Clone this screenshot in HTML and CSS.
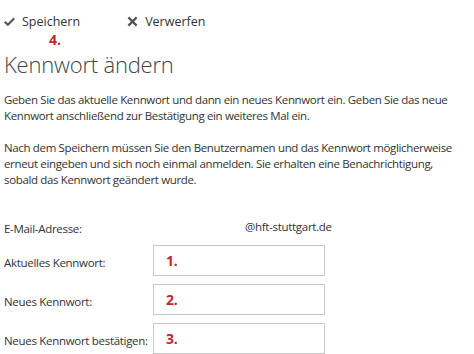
FILE: index.html
```html
<!DOCTYPE html>
<html lang="de">
<head>
    <meta charset="UTF-8">
    <title>Kennwort ändern</title>
    <link rel="stylesheet" href="styles.css">
</head>
<body>
    <div class="page">
        <div class="toolbar">
            <span class="tool">
                <svg class="icon" viewBox="0 0 12 12" width="11" height="11"><path d="M0.8 6.3 L4.2 9.6 L11.2 2.4" fill="none" stroke="#555" stroke-width="2.3"/></svg>
                Speichern
            </span>
            <span class="tool">
                <svg class="icon" viewBox="0 0 12 12" width="11" height="11"><path d="M1.5 1.5 L10.5 10.5 M10.5 1.5 L1.5 10.5" fill="none" stroke="#555" stroke-width="2.4"/></svg>
                Verwerfen
            </span>
        </div>
        <div class="step step-save">4.</div>

        <h1 class="title">Kennwort ändern</h1>

        <p class="info">Geben Sie das aktuelle Kennwort und dann ein neues Kennwort ein. Geben Sie das neue Kennwort anschließend zur Bestätigung ein weiteres Mal ein.</p>
        <p class="info">Nach dem Speichern müssen Sie den Benutzernamen und das Kennwort möglicherweise erneut eingeben und sich noch einmal anmelden. Sie erhalten eine Benachrichtigung, sobald das Kennwort geändert wurde.</p>

        <div class="form">
            <div class="label email">E-Mail-Adresse:</div>
            <div class="value">@hft-stuttgart.de</div>

            <div class="label">Aktuelles Kennwort:</div>
            <div class="field"><span class="step">1.</span></div>

            <div class="label">Neues Kennwort:</div>
            <div class="field"><span class="step">2.</span></div>

            <div class="label">Neues Kennwort bestätigen:</div>
            <div class="field"><span class="step">3.</span></div>
        </div>
    </div>
</body>
</html>
```

FILE: styles.css
```css
body {
    margin: 0;
    padding: 0;
    background: #fff;
    font-family: "Open Sans", sans-serif;
    color: #333;
}

.page {
    padding: 12px 0 0 4px;
}

.toolbar {
    display: flex;
    gap: 47px;
    height: 18px;
    align-items: center;
    font-size: 12.5px;
    color: #333;
}

.tool {
    display: flex;
    align-items: center;
    gap: 7px;
}

.step {
    color: #c4262e;
    font-weight: bold;
    font-size: 14px;
}

.step-save {
    padding-left: 45px;
    line-height: 19px;
}

.title {
    margin: 0;
    font-size: 22px;
    font-weight: 300;
    letter-spacing: -0.2px;
    color: #444;
    line-height: 31px;
}

.info {
    margin: 12px 0 16px;
    font-size: 11.5px;
    letter-spacing: -0.35px;
    line-height: 16px;
    width: 462px;
}

.form {
    margin-top: 17px;
    display: grid;
    grid-template-columns: 149px 172px;
    grid-template-rows: 32px 31px 31px 31px;
    row-gap: 8px;
    align-items: center;
    font-size: 11.5px;
    letter-spacing: -0.3px;
    white-space: nowrap;
}

.label {
    padding-top: 3px;
}

.label.email {
    align-self: end;
    padding: 0 0 1px;
}

.value {
    align-self: end;
    padding: 0 0 3px 92px;
}

.field {
    height: 31px;
    box-sizing: border-box;
    border: 1px solid #c8c8c8;
    display: flex;
    align-items: center;
    padding-left: 12px;
}
```
